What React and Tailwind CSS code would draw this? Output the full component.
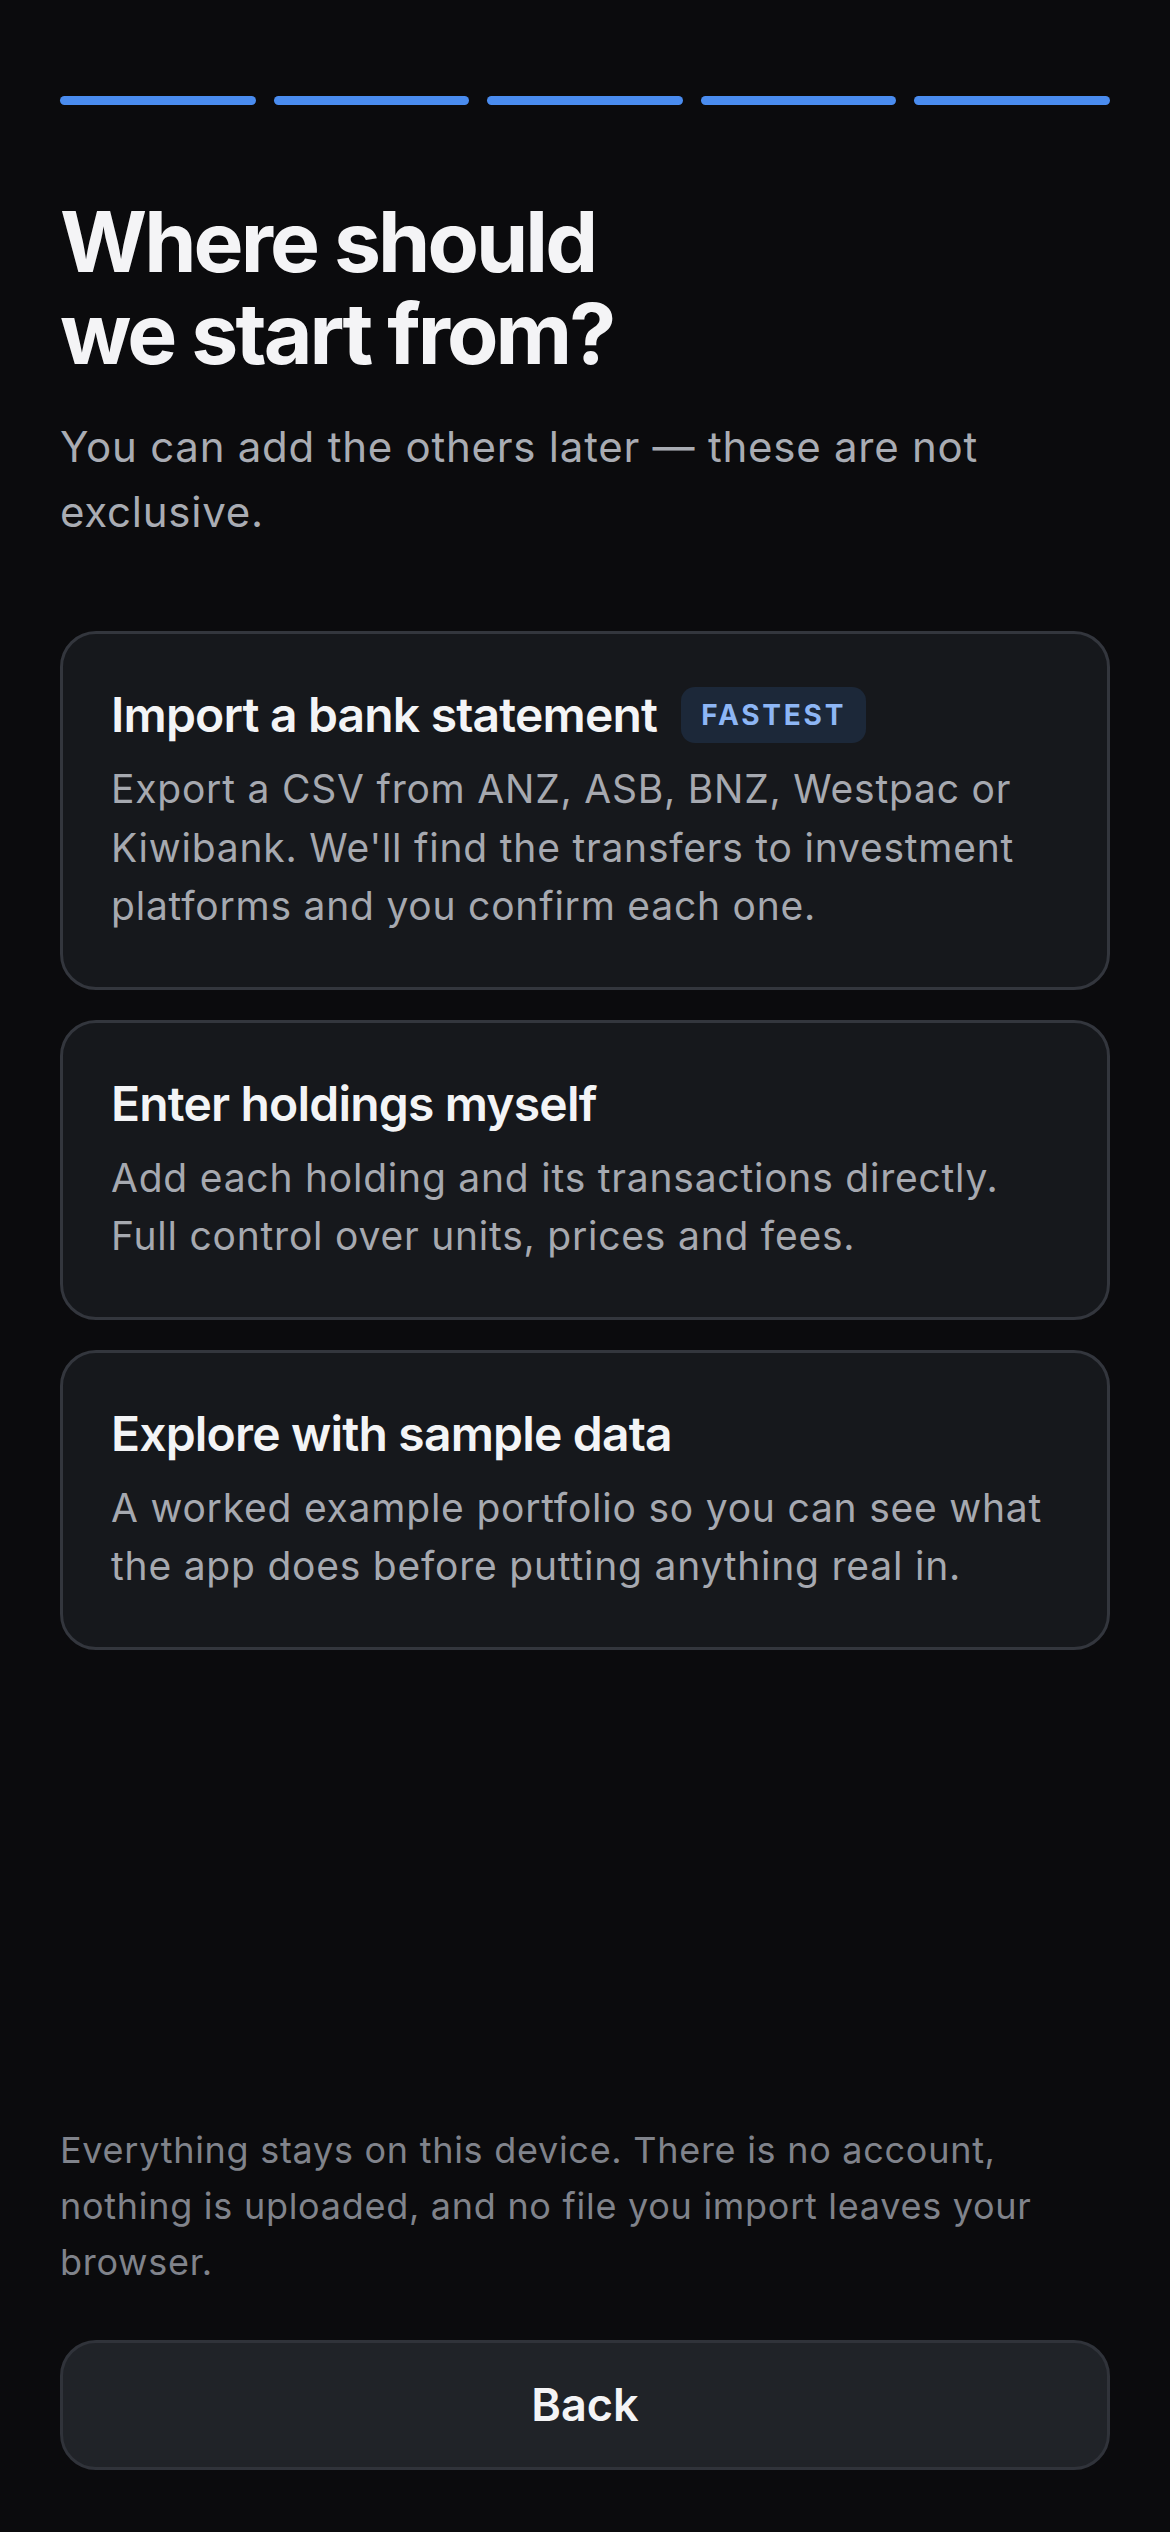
import React from "react";

function OptionCard({ title, badge, desc }) {
  return (
    <button
      type="button"
      className="w-full text-left rounded-[36px] border-[3px] border-[#33363d] bg-[#16181c] px-[48px] pt-[51px] pb-[51px]"
    >
      <div className="flex items-center gap-[24px]">
        <span className="text-[48px] leading-[60px] font-semibold text-[#f3f4f6] tracking-[-0.017em]">
          {title}
        </span>
        {badge && (
          <span className="rounded-[14px] bg-[#1c2839] px-[20px] h-[56px] flex items-center text-[28px] font-bold tracking-[0.1em] text-[#8db6f5]">
            {badge}
          </span>
        )}
      </div>
      <p className="mt-[15px] text-[39px] leading-[58.5px] tracking-[0.02em] text-[#a6a9b0]">{desc}</p>
    </button>
  );
}

export default function App() {
  return (
    <div className="min-h-screen w-full bg-[#0b0b0d] flex flex-col px-[60px] pt-[96px] pb-[62px] font-['Inter',sans-serif]">
      <div className="flex gap-[18px]">
        {[0, 1, 2, 3, 4].map((i) => (
          <div key={i} className="h-[9px] flex-1 rounded-full bg-[#4a8cef]" />
        ))}
      </div>

      <h1 className="mt-[91px] text-[84px] leading-[92px] font-bold tracking-[-0.035em] text-[#f4f4f6]">
        Where should
        <br />
        we start from?
      </h1>

      <p className="mt-[34px] text-[42px] leading-[65px] tracking-[0.018em] text-[#a9acb3]">
        You can add the others later — these are not exclusive.
      </p>

      <div className="mt-[87px] flex flex-col gap-[30px]">
        <OptionCard
          title="Import a bank statement"
          badge="FASTEST"
          desc="Export a CSV from ANZ, ASB, BNZ, Westpac or Kiwibank. We'll find the transfers to investment platforms and you confirm each one."
        />
        <OptionCard
          title="Enter holdings myself"
          desc="Add each holding and its transactions directly. Full control over units, prices and fees."
        />
        <OptionCard
          title="Explore with sample data"
          desc="A worked example portfolio so you can see what the app does before putting anything real in."
        />
      </div>

      <div className="flex-1" />

      <p className="text-[36px] leading-[56px] tracking-[0.02em] text-[#80838b]">
        Everything stays on this device. There is no account, nothing is uploaded, and no file you import leaves your browser.
      </p>

      <button
        type="button"
        className="mt-[50px] h-[130px] w-full rounded-[36px] border-[3px] border-[#30333a] bg-[#202328] text-[45px] font-semibold text-[#f4f4f6]"
      >
        Back
      </button>
    </div>
  );
}
